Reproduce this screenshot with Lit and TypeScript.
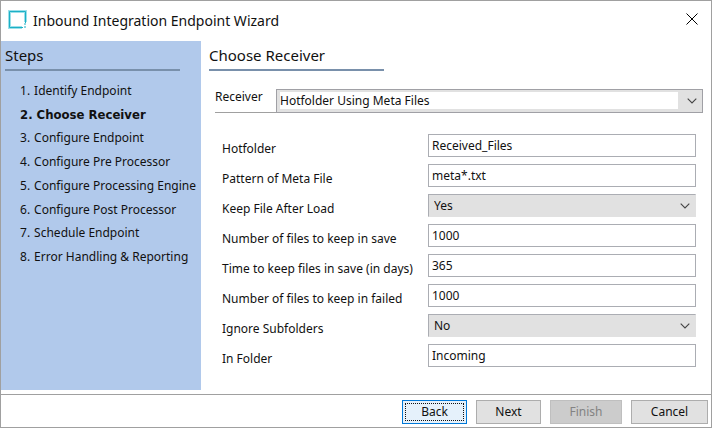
import { LitElement, html, css, svg } from "lit";
import { customElement, property, state } from "lit/decorators.js";
import { classMap } from "lit/directives/class-map.js";

interface Field {
  id: string;
  label: string;
  value: string;
  options?: string[];
}

const STEPS = [
  "Identify Endpoint",
  "Choose Receiver",
  "Configure Endpoint",
  "Configure Pre Processor",
  "Configure Processing Engine",
  "Configure Post Processor",
  "Schedule Endpoint",
  "Error Handling & Reporting",
];

const FIELDS: Field[] = [
  { id: "hotfolder", label: "Hotfolder", value: "Received_Files" },
  { id: "pattern", label: "Pattern of Meta File", value: "meta*.txt" },
  { id: "keep", label: "Keep File After Load", value: "Yes", options: ["Yes", "No"] },
  { id: "save-count", label: "Number of files to keep in save", value: "1000" },
  { id: "save-days", label: "Time to keep files in save (in days)", value: "365" },
  { id: "failed-count", label: "Number of files to keep in failed", value: "1000" },
  { id: "subfolders", label: "Ignore Subfolders", value: "No", options: ["No", "Yes"] },
  { id: "folder", label: "In Folder", value: "Incoming" },
];

const chevron = html`<svg class="chevron" viewBox="0 0 10 6" width="10" height="6" aria-hidden="true">
  ${svg`<path d="M0.7 0.7 L5 5 L9.3 0.7" fill="none" stroke="#444" stroke-width="1.1" />`}
</svg>`;

@customElement("wizard-steps")
export class WizardSteps extends LitElement {
  @property({ type: Number }) current = 0;

  static styles = css`
    :host {
      display: block;
      background: #b1c9eb;
      padding: 0 4px;
    }
    .title {
      margin: 0 17px 0 0;
      padding-bottom: 2px;
      height: 26px;
      border-bottom: 2px solid #7990ab;
      font: 400 15px/28px "Noto Sans", sans-serif;
    }
    .list {
      display: grid;
      grid-auto-rows: 1fr;
      height: 190px;
      margin: 8px 0 0;
      padding: 0 0 0 15px;
      list-style: none;
      white-space: nowrap;
    }
    .step {
      display: flex;
      align-items: center;
      gap: 4px;
    }
    .current {
      font: 700 13px/16px "DejaVu Sans Condensed", "DejaVu Sans", sans-serif;
    }
  `;

  render() {
    return html`
      <h2 class="title">Steps</h2>
      <ol class="list">
        ${STEPS.map(
          (name, i) => html`<li class=${classMap({ step: true, current: i === this.current })}>
            <span>${i + 1}.</span><span>${name}</span>
          </li>`
        )}
      </ol>
    `;
  }
}

@customElement("app-root")
export class AppRoot extends LitElement {
  @state() private step = 1;

  static styles = css`
    :host {
      display: block;
      color: #111;
      font: 12px/16px "Noto Sans", sans-serif;
    }
    * {
      box-sizing: border-box;
    }
    .window {
      display: grid;
      grid-template-rows: 40px 1fr auto;
      min-height: 100vh;
      border: 1px solid #a0a0a0;
      background: #fff;
    }
    .titlebar {
      display: flex;
      align-items: flex-start;
      gap: 6px;
      padding: 9px 12px 0 7px;
    }
    .caption {
      flex: 1;
      margin: 0;
      font: 400 14px/22px "Noto Sans", sans-serif;
    }
    .close {
      display: flex;
      align-items: center;
      height: 18px;
      padding: 0;
      border: 0;
      background: none;
    }
    .body {
      display: grid;
      grid-template-columns: 200px 1fr;
      padding-bottom: 4px;
    }
    .main {
      padding: 0 8px;
      min-width: 0;
    }
    .heading {
      width: 175px;
      height: 30px;
      margin: 0;
      border-bottom: 2px solid #7990ab;
      font: 400 15px/28px "Noto Sans", sans-serif;
    }
    .receiver {
      display: grid;
      grid-template-columns: 61px 1fr;
      height: 24px;
      margin: 18px 0 0 6px;
    }
    .receiver-label {
      border-bottom: 1px solid #a0a0a0;
    }
    .fields {
      display: grid;
      gap: 7px;
      padding: 21px 7px 0 13px;
    }
    .row {
      display: grid;
      grid-template-columns: 206px 1fr;
      height: 23px;
    }
    .label {
      padding-top: 7px;
      white-space: nowrap;
    }
    .input,
    .select {
      width: 100%;
      height: 100%;
      min-width: 0;
      margin: 0;
      border: 1px solid #abadb3;
      border-radius: 0;
      outline: 0;
      color: inherit;
      font: inherit;
    }
    .input {
      padding: 0 3px;
      background: #fff;
    }
    .combo {
      display: grid;
      align-items: center;
      min-width: 0;
    }
    .combo > * {
      grid-area: 1 / 1;
    }
    .select {
      appearance: none;
      padding: 0 24px 0 5px;
      border-right-color: #e1e1e1;
      border-bottom-color: #e1e1e1;
      background: #e1e1e1;
    }
    .boxed .select {
      padding-left: 3px;
      border-color: #a0a0a5;
      background: linear-gradient(#fff, #fff) no-repeat 3px 2px / calc(100% - 27px) 17px #e1e1e1;
    }
    .chevron {
      justify-self: end;
      margin-right: 6px;
      pointer-events: none;
    }
    .footer {
      display: flex;
      justify-content: flex-end;
      gap: 9px;
      padding: 5px 3px 3px;
      border-top: 1px solid #a0a0a0;
    }
    .button {
      width: 65px;
      height: 24px;
      padding: 0;
      border: 1px solid #adadad;
      background: #e1e1e1;
      color: #111;
      font: inherit;
    }
    .finish {
      width: 72px;
    }
    .cancel {
      width: 77px;
    }
    .default {
      border-color: #0078d7;
      background: #e5f1fb;
      outline: 1px dotted #111;
      outline-offset: -4px;
    }
    .button:disabled {
      border-color: #bfbfbf;
      background: #ccc;
      color: #838383;
    }
  `;

  private control(field: Field) {
    if (!field.options) {
      return html`<input class="input" id=${field.id} type="text" .value=${field.value} />`;
    }
    return html`<div class="combo">
      <select class="select" id=${field.id}>
        ${field.options.map((o) => html`<option ?selected=${o === field.value}>${o}</option>`)}
      </select>
      ${chevron}
    </div>`;
  }

  render() {
    return html`
      <div class="window">
        <header class="titlebar">
          <svg width="19" height="19" viewBox="0 0 19 19" aria-hidden="true">
            <path d="M17.5 12V1.5H1.5V17.5H14" fill="none" stroke="#9be0ea" stroke-width="3" />
            <path d="M17.5 13V1.5H1.5V17.5H15" fill="none" stroke="#1bb0c6" stroke-width="1" />
            <path d="M16 14h2M16 17h2" stroke="#1bb0c6" stroke-width="1" />
          </svg>
          <h1 class="caption">Inbound Integration Endpoint Wizard</h1>
          <button class="close" aria-label="Close">
            <svg width="14" height="14" viewBox="0 0 14 14" aria-hidden="true">
              <path d="M1.5 1.5L12.5 12.5M12.5 1.5L1.5 12.5" stroke="#000" stroke-width="1" />
            </svg>
          </button>
        </header>
        <div class="body">
          <wizard-steps .current=${this.step}></wizard-steps>
          <main class="main">
            <h2 class="heading">${STEPS[this.step]}</h2>
            <div class="receiver">
              <label class="receiver-label" for="receiver">Receiver</label>
              <div class="combo boxed">
                <select class="select" id="receiver">
                  <option>Hotfolder Using Meta Files</option>
                </select>
                ${chevron}
              </div>
            </div>
            <div class="fields">
              ${FIELDS.map(
                (f) => html`<div class="row">
                  <label class="label" for=${f.id}>${f.label}</label>
                  ${this.control(f)}
                </div>`
              )}
            </div>
          </main>
        </div>
        <footer class="footer">
          <button class="button default" @click=${() => (this.step = Math.max(0, this.step - 1))}>Back</button>
          <button class="button" @click=${() => (this.step = Math.min(STEPS.length - 1, this.step + 1))}>Next</button>
          <button class="button finish" disabled>Finish</button>
          <button class="button cancel">Cancel</button>
        </footer>
      </div>
    `;
  }
}
